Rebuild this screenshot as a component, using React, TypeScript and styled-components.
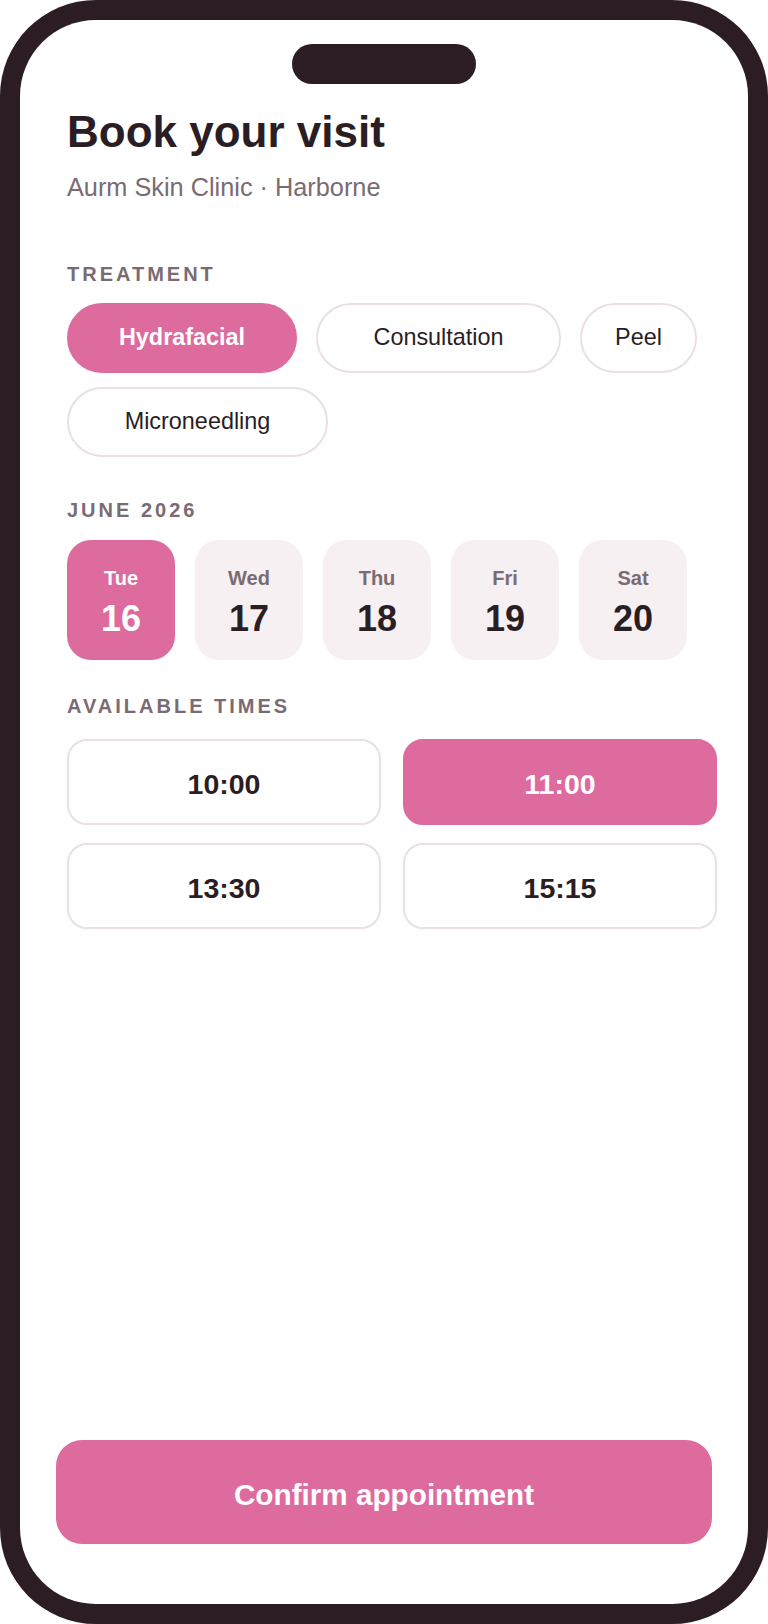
import React, { useState } from 'react'
import styled, { createGlobalStyle } from 'styled-components'

const pink = '#DD6B9E'
const ink = '#2A1D24'
const muted = '#7A6B73'
const line = '#EADFE3'

const GlobalStyle = createGlobalStyle`
  html, body {
    margin: 0;
    padding: 0;
    background: #ffffff;
  }
  * {
    box-sizing: border-box;
  }
  body {
    font-family: "Liberation Sans", Arial, sans-serif;
  }
`

const treatments = [
  { name: 'Hydrafacial', width: 230 },
  { name: 'Consultation', width: 245 },
  { name: 'Peel', width: 117 },
  { name: 'Microneedling', width: 261 },
]

const days = [
  { day: 'Tue', num: 16 },
  { day: 'Wed', num: 17 },
  { day: 'Thu', num: 18 },
  { day: 'Fri', num: 19 },
  { day: 'Sat', num: 20 },
]

const times = ['10:00', '11:00', '13:30', '15:15']

export default function App() {
  const [treatment, setTreatment] = useState('Hydrafacial')
  const [date, setDate] = useState(16)
  const [time, setTime] = useState('11:00')

  return (
    <>
      <GlobalStyle />
      <Phone>
        <Screen>
          <Island />
          <Content>
            <Title>Book your visit</Title>
            <Subtitle>Aurm Skin Clinic · Harborne</Subtitle>

            <Label $top={59.5} $gap={17.4}>Treatment</Label>
            <ChipRow>
              {treatments.map((t) => (
                <Chip
                  key={t.name}
                  $w={t.width}
                  $active={treatment === t.name}
                  onClick={() => setTreatment(t.name)}
                >
                  {t.name}
                </Chip>
              ))}
            </ChipRow>

            <Label $top={41} $gap={18.3}>June 2026</Label>
            <DayRow>
              {days.map((d) => (
                <DayCard key={d.num} $active={date === d.num} onClick={() => setDate(d.num)}>
                  <DayName $active={date === d.num}>{d.day}</DayName>
                  <DayNum $active={date === d.num}>{d.num}</DayNum>
                </DayCard>
              ))}
            </DayRow>

            <Label $top={34} $gap={21}>Available times</Label>
            <TimeGrid>
              {times.map((t) => (
                <TimeSlot key={t} $active={time === t} onClick={() => setTime(t)}>
                  {t}
                </TimeSlot>
              ))}
            </TimeGrid>
          </Content>

          <Footer>
            <ConfirmButton>Confirm appointment</ConfirmButton>
          </Footer>
        </Screen>
      </Phone>
    </>
  )
}

const Phone = styled.div`
  width: 768px;
  height: 1624px;
  padding: 20px;
  background: #2C1D25;
  border-radius: 96px;
`

const Screen = styled.div`
  position: relative;
  height: 100%;
  background: #ffffff;
  border-radius: 76px;
  display: flex;
  flex-direction: column;
  overflow: hidden;
`

const Island = styled.div`
  position: absolute;
  top: 24px;
  left: 50%;
  transform: translateX(-50%);
  width: 184px;
  height: 40px;
  border-radius: 20px;
  background: #2C1D25;
`

const Content = styled.div`
  padding: 86px 31px 0 47px;
  display: flex;
  flex-direction: column;
  align-items: flex-start;
`

const Title = styled.h1`
  margin: 0;
  font-size: 44px;
  line-height: 1.2;
  font-weight: 700;
  color: ${ink};
`

const Subtitle = styled.p`
  margin: 13px 0 0;
  font-size: 25.3px;
  line-height: 1.2;
  font-weight: 400;
  color: ${muted};
`

const Label = styled.div<{ $top: number; $gap: number }>`
  margin: ${(p) => p.$top}px 0 ${(p) => p.$gap}px;
  font-size: 20px;
  line-height: 1.2;
  font-weight: 700;
  letter-spacing: 3px;
  text-transform: uppercase;
  color: ${muted};
`

const ChipRow = styled.div`
  display: flex;
  flex-wrap: wrap;
  gap: 14px 19px;
  width: 100%;
`

const Chip = styled.button<{ $active?: boolean; $w: number }>`
  width: ${(p) => p.$w}px;
  height: 70px;
  padding: 0;
  border-radius: 35px;
  border: 2px solid ${(p) => (p.$active ? pink : line)};
  background: ${(p) => (p.$active ? pink : '#ffffff')};
  color: ${(p) => (p.$active ? '#ffffff' : ink)};
  font-family: inherit;
  font-size: 23.4px;
  font-weight: ${(p) => (p.$active ? 700 : 400)};
  line-height: 1;
  display: flex;
  align-items: center;
  justify-content: center;
  cursor: pointer;
`

const DayRow = styled.div`
  display: flex;
  gap: 20px;
`

const DayCard = styled.button<{ $active?: boolean }>`
  width: 108px;
  height: 120px;
  padding: 28px 0 0;
  border: none;
  border-radius: 24px;
  background: ${(p) => (p.$active ? pink : '#F6F0F2')};
  font-family: inherit;
  display: flex;
  flex-direction: column;
  align-items: center;
  gap: 13px;
  cursor: pointer;
`

const DayName = styled.span<{ $active?: boolean }>`
  font-size: 20px;
  line-height: 1;
  font-weight: 700;
  color: ${(p) => (p.$active ? '#ffffff' : muted)};
`

const DayNum = styled.span<{ $active?: boolean }>`
  font-size: 36px;
  line-height: 1;
  font-weight: 700;
  color: ${(p) => (p.$active ? '#ffffff' : ink)};
`

const TimeGrid = styled.div`
  display: grid;
  grid-template-columns: repeat(2, 314px);
  grid-auto-rows: 86px;
  column-gap: 22px;
  row-gap: 18px;
`

const TimeSlot = styled.button<{ $active?: boolean }>`
  padding: 4px 0 0;
  border-radius: 20px;
  border: 2px solid ${(p) => (p.$active ? pink : line)};
  background: ${(p) => (p.$active ? pink : '#ffffff')};
  color: ${(p) => (p.$active ? '#ffffff' : ink)};
  font-family: inherit;
  font-size: 28.5px;
  font-weight: 700;
  line-height: 1;
  display: flex;
  align-items: center;
  justify-content: center;
  cursor: pointer;
`

const Footer = styled.div`
  margin-top: auto;
  padding: 0 36px 60px;
`

const ConfirmButton = styled.button`
  width: 100%;
  height: 104px;
  padding: 6px 0 0;
  border: none;
  border-radius: 26px;
  background: ${pink};
  color: #ffffff;
  font-family: inherit;
  font-size: 29.7px;
  font-weight: 700;
  line-height: 1;
  cursor: pointer;
`
